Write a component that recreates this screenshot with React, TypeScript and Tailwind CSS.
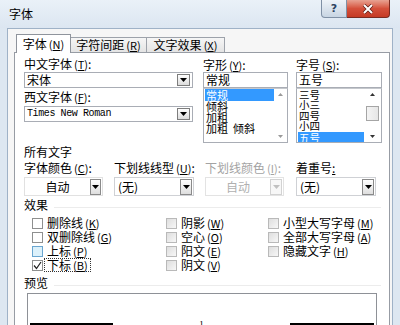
import React from "react";

function Acc({ c }: { c: string }) {
  return (
    <span className="ml-[2px] text-[11px]">
      (<span className="underline">{c}</span>)
    </span>
  );
}

function Tri({ color = "#000" }: { color?: string }) {
  return (
    <svg width="7" height="4" viewBox="0 0 7 4">
      <polygon points="0,0 7,0 3.5,4" fill={color} />
    </svg>
  );
}

function SmallTri({ up, color = "#444" }: { up?: boolean; color?: string }) {
  return (
    <svg width="5" height="3" viewBox="0 0 5 3">
      {up ? <polygon points="0,3 5,3 2.5,0" fill={color} /> : <polygon points="0,0 5,0 2.5,3" fill={color} />}
    </svg>
  );
}

function Box({ kind, checked }: { kind: "white" | "hover" | "gray"; checked?: boolean }) {
  const cls =
    kind === "white"
      ? "w-[11px] h-[11px] border border-[#8e8f8f] bg-white flex items-center justify-center"
      : kind === "hover"
      ? "w-[11px] h-[11px] border border-[#6aa6d0] bg-[#dcf1fb] flex items-center justify-center"
      : "w-[11px] h-[11px] border border-[#b9b9b9] bg-gradient-to-br from-[#dedede] to-[#f7f7f7] flex items-center justify-center";
  return (
    <div className={cls}>
      {checked ? (
        <svg width="9" height="9" viewBox="0 0 9 9">
          <path d="M1 4.5 L3.5 7.5 L8 1" stroke="#222" strokeWidth="1.2" fill="none" />
        </svg>
      ) : null}
    </div>
  );
}

function CB({
  label,
  acc,
  kind,
  checked,
  focus,
}: {
  label: string;
  acc: string;
  kind: "white" | "hover" | "gray";
  checked?: boolean;
  focus?: boolean;
}) {
  return (
    <div className="flex items-center h-[14px]">
      <Box kind={kind} checked={checked} />
      <span
        className={
          focus
            ? "ml-[1px] px-[2px] h-[14px] leading-[12px] border border-dotted border-[#333]"
            : "ml-[4px] leading-[14px]"
        }
      >
        {label}
        <Acc c={acc} />
      </span>
    </div>
  );
}

export default function App() {
  return (
    <div className="w-[400px] h-[325px] overflow-hidden bg-[#dde7f1] text-black text-[12px] font-['Noto_Sans_CJK_SC','Noto_Sans',sans-serif]">
      {/* title bar */}
      <div className="h-[28px] flex items-start bg-gradient-to-b from-[#eaf1f8] to-[#dce6f1]">
        <span className="ml-[9px] mt-[7px] leading-[14px]">字体</span>
        <div className="ml-auto mr-[10px] flex">
          <div className="w-[26px] h-[18px] border border-t-0 border-[#7f90a5] rounded-bl-[4px] bg-gradient-to-b from-[#eef3f8] to-[#c8d5e3] flex items-center justify-center text-[11px] leading-[11px] font-bold text-[#2d4260] font-['DejaVu_Sans',sans-serif]">
            ?
          </div>
          <div className="w-[43px] h-[18px] border border-t-0 border-l-0 border-[#7a2b21] rounded-br-[4px] bg-gradient-to-b from-[#e7a292] via-[#d4503b] to-[#c53a24] flex items-center justify-center">
            <svg width="12" height="10" viewBox="0 0 12 10">
              <path d="M2 1 L10 9 M10 1 L2 9" stroke="#5a1a12" strokeWidth="3.4" />
              <path d="M2 1 L10 9 M10 1 L2 9" stroke="#fff" strokeWidth="2" />
            </svg>
          </div>
        </div>
      </div>

      {/* client */}
      <div className="mx-[7px] h-[297px] border-x border-t border-[#9fb2c7] bg-[#f6f6f6] pl-[6px] pt-[5px]">
        {/* tabs */}
        <div className="relative z-10 flex items-end h-[19px] ml-[2px]">
          <div className="w-[55px] h-[19px] border border-b-0 border-[#8f949c] bg-white flex items-center justify-center leading-[14px]">
            字体<Acc c="N" />
          </div>
          <div className="w-[76px] h-[15px] mb-[1px] border border-l-0 border-b-0 border-[#9da2aa] bg-gradient-to-b from-[#f6f6f6] to-[#e4e4e4] flex items-center justify-center leading-[14px]">
            字符间距<Acc c="R" />
          </div>
          <div className="w-[78px] h-[15px] mb-[1px] border border-l-0 border-b-0 border-[#9da2aa] bg-gradient-to-b from-[#f6f6f6] to-[#e4e4e4] flex items-center justify-center leading-[14px]">
            文字效果<Acc c="X" />
          </div>
        </div>

        {/* page */}
        <div className="-mt-px w-[376px] h-[300px] border border-[#979ca4] bg-white pl-[9px] pt-[4px]">
          {/* top section */}
          <div className="flex">
            <div className="w-[169px]">
              <div className="h-[14px] leading-[14px]">
                中文字体<Acc c="T" />:
              </div>
              <div className="mt-[1px] h-[16px] border border-[#a9adb5] flex items-center">
                <span className="ml-[2px] leading-[14px]">宋体</span>
                <div className="ml-auto mr-[2px] w-[13px] h-[12px] border border-[#7d7d7d] bg-gradient-to-b from-white to-[#dcdcdc] flex items-center justify-center">
                  <Tri />
                </div>
              </div>
              <div className="mt-[2px] h-[14px] leading-[14px]">
                西文字体<Acc c="F" />:
              </div>
              <div className="mt-[2px] h-[16px] border border-[#a9adb5] flex items-center">
                <span className="ml-[2px] text-[10px] tracking-[-0.4px] leading-[12px] font-['Liberation_Mono',monospace]">
                  Times New Roman
                </span>
                <div className="ml-auto mr-[2px] w-[13px] h-[12px] border border-[#7d7d7d] bg-gradient-to-b from-white to-[#dcdcdc] flex items-center justify-center">
                  <Tri />
                </div>
              </div>
            </div>

            <div className="ml-[10px] w-[85px]">
              <div className="h-[14px] leading-[14px] mt-[1px]">
                字形<Acc c="Y" />:
              </div>
              <div className="h-[16px] border border-[#a9adb5] flex items-center">
                <span className="ml-[2px] leading-[14px]">常规</span>
              </div>
              <div className="h-[55px] border border-[#a9adb5] border-t-[#c5c8cd] flex text-[11px]">
                <div className="flex-1 pl-[1px] overflow-hidden">
                  <div className="h-[12px] leading-[12px] bg-[#3399ff] text-white pl-[1px]">常规</div>
                  <div className="h-[11px] leading-[11px] pl-[1px]">倾斜</div>
                  <div className="h-[11px] leading-[11px] pl-[1px]">加粗</div>
                  <div className="h-[11px] leading-[11px] pl-[1px]">加粗&nbsp;&nbsp;倾斜</div>
                </div>
                <div className="w-[13px] flex flex-col items-center justify-between py-[4px]">
                  <SmallTri up color="#9a9a9a" />
                  <SmallTri color="#9a9a9a" />
                </div>
              </div>
            </div>

            <div className="ml-[8px] w-[86px]">
              <div className="h-[14px] leading-[14px] mt-[1px]">
                字号<Acc c="S" />:
              </div>
              <div className="h-[16px] border border-[#a9adb5] flex items-center">
                <span className="ml-[2px] leading-[14px]">五号</span>
              </div>
              <div className="h-[55px] border border-[#a9adb5] border-t-[#c5c8cd] flex text-[10.5px]">
                <div className="flex-1 pl-[1px] pt-[0.5px] overflow-hidden">
                  <div className="h-[10.5px] leading-[10.5px] pl-[1px]">三号</div>
                  <div className="h-[10.5px] leading-[10.5px] pl-[1px]">小三</div>
                  <div className="h-[10.5px] leading-[10.5px] pl-[1px]">四号</div>
                  <div className="h-[10.5px] leading-[10.5px] pl-[1px]">小四</div>
                  <div className="h-[11px] leading-[11px] bg-[#3399ff] text-white pl-[1px]">五号</div>
                </div>
                <div className="w-[17px] flex flex-col items-center py-[4px]">
                  <SmallTri up color="#333" />
                  <div className="mt-[10px] w-[13px] h-[15px] border border-[#a5a5a5] bg-gradient-to-r from-[#f4f4f4] to-[#e6e6e6]" />
                  <div className="mt-auto">
                    <SmallTri color="#333" />
                  </div>
                </div>
              </div>
            </div>
          </div>

          {/* 所有文字 */}
          <div className="mt-[2px] h-[14px] flex items-center">
            <span className="leading-[14px]">所有文字</span>
          </div>
          <div className="mt-[2px] grid grid-cols-[90px_91px_91px_80px]">
            <div className="h-[14px] leading-[14px]">
              字体颜色<Acc c="C" />:
            </div>
            <div className="h-[14px] leading-[14px]">
              下划线线型<Acc c="U" />:
            </div>
            <div className="h-[14px] leading-[14px] text-[#a3a3a3]">
              下划线颜色<Acc c="I" />:
            </div>
            <div className="h-[14px] leading-[14px]">
              着重号<span className="underline">:</span>
            </div>
          </div>
          <div className="mt-[2px] grid grid-cols-[90px_91px_91px_80px]">
            <div className="w-[79px] h-[19px] border border-[#e1e1e1] flex items-center">
              <span className="flex-1 text-center leading-[14px]">自动</span>
              <div className="mr-[1px] w-[11px] h-[16px] border border-[#8a8a8a] bg-gradient-to-b from-white to-[#dedede] flex items-center justify-center">
                <Tri />
              </div>
            </div>
            <div className="w-[80px] h-[19px] border border-[#cfd1d5] flex items-center">
              <span className="ml-[3px] leading-[14px]">(无)</span>
              <div className="ml-auto mr-[1px] w-[12px] h-[16px] border border-[#8a8a8a] bg-gradient-to-b from-white to-[#dedede] flex items-center justify-center">
                <Tri />
              </div>
            </div>
            <div className="w-[79px] h-[19px] border border-[#e3e3e3] flex items-center">
              <span className="flex-1 text-center leading-[14px] text-[#b0b0b0]">自动</span>
              <div className="mr-[1px] w-[12px] h-[16px] border border-[#d2d2d2] bg-[#f7f7f7] flex items-center justify-center">
                <Tri color="#c0c0c0" />
              </div>
            </div>
            <div className="w-[80px] h-[19px] border border-[#cfd1d5] flex items-center">
              <span className="ml-[3px] leading-[14px]">(无)</span>
              <div className="ml-auto mr-[1px] w-[12px] h-[16px] border border-[#8a8a8a] bg-gradient-to-b from-white to-[#dedede] flex items-center justify-center">
                <Tri />
              </div>
            </div>
          </div>

          {/* 效果 */}
          <div className="mt-[2px] h-[14px] flex items-center">
            <span className="leading-[14px]">效果</span>
            <div className="ml-[6px] mr-[8px] mt-[4px] flex-1 h-px bg-[#ececec]" />
          </div>
          <div className="mt-[4px] pl-[8px] flex">
            <div className="w-[134px]">
              <CB label="删除线" acc="K" kind="white" />
              <CB label="双删除线" acc="G" kind="white" />
              <CB label="上标" acc="P" kind="hover" />
              <CB label="下标" acc="B" kind="white" checked focus />
            </div>
            <div className="w-[102px]">
              <CB label="阴影" acc="W" kind="gray" />
              <CB label="空心" acc="O" kind="gray" />
              <CB label="阳文" acc="E" kind="gray" />
              <CB label="阴文" acc="V" kind="gray" />
            </div>
            <div>
              <CB label="小型大写字母" acc="M" kind="gray" />
              <CB label="全部大写字母" acc="A" kind="gray" />
              <CB label="隐藏文字" acc="H" kind="gray" />
            </div>
          </div>

          {/* 预览 */}
          <div className="mt-[4px] h-[14px] flex items-center">
            <span className="leading-[14px]">预览</span>
            <div className="ml-[6px] mr-[8px] mt-[4px] flex-1 h-px bg-[#ececec]" />
          </div>
          <div className="mt-[3px] ml-[3px] w-[350px] h-[40px] border border-[#8e9197] bg-white flex items-start pt-[29px] px-[2px]">
            <div className="w-[83px] h-[3px] bg-black" />
            <div className="flex-1 flex justify-center">
              <span className="-mt-[3px] text-[9px] leading-[9px] font-['Liberation_Serif',serif]">1</span>
            </div>
            <div className="w-[84px] h-[3px] bg-black" />
          </div>
        </div>
      </div>
    </div>
  );
}
